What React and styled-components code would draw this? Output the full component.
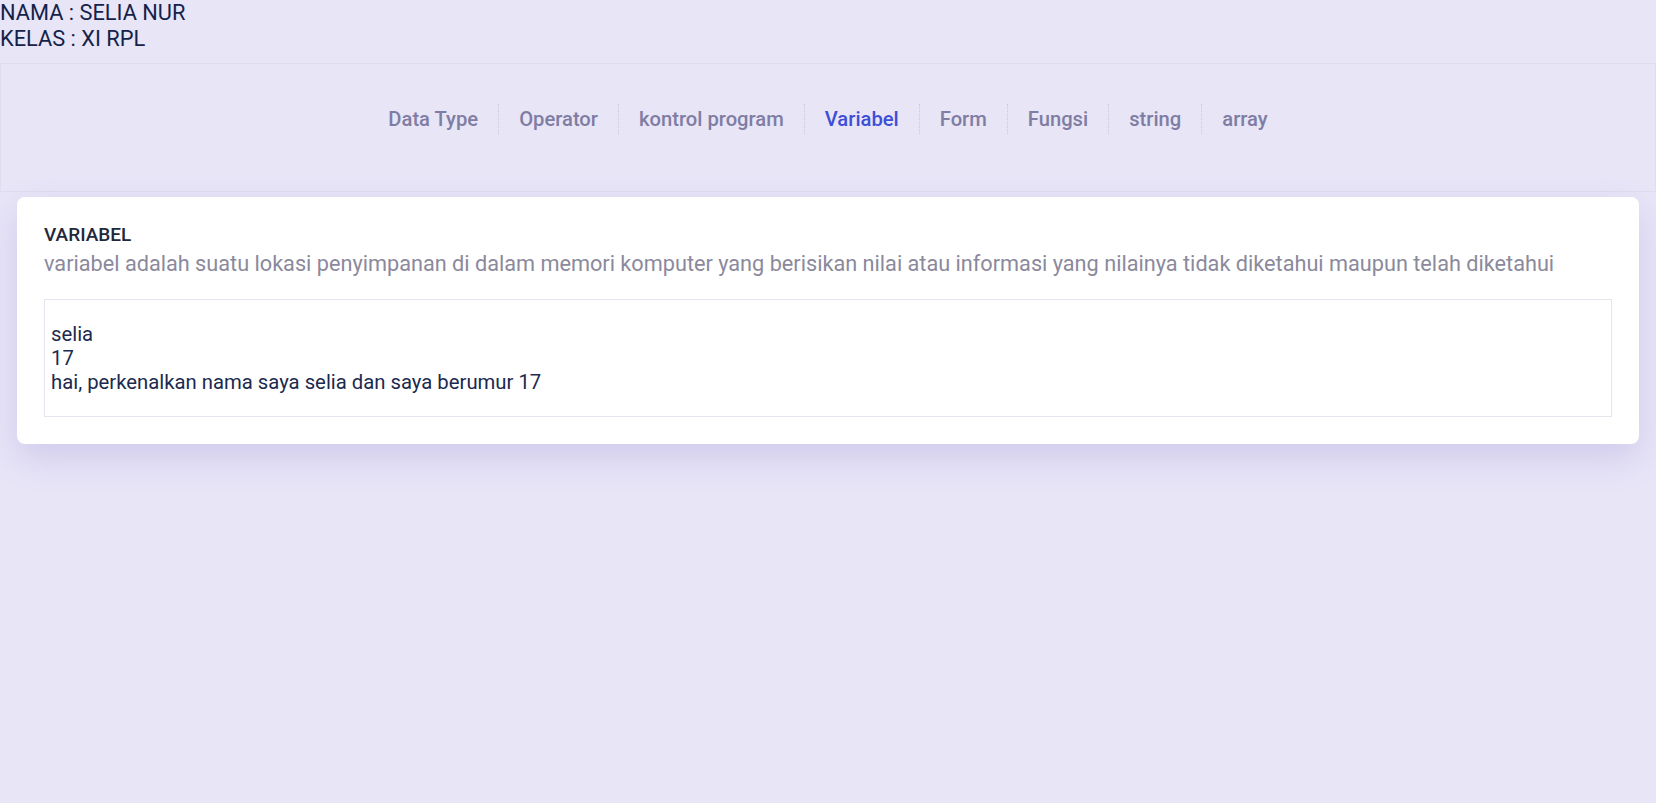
import styled, { createGlobalStyle } from 'styled-components';

// --- STYLED COMPONENTS ---

const GlobalStyle = createGlobalStyle`
  html, body {
    margin: 0;
    padding: 0;
    background-color: #e8e5f7;
    font-family: Roboto, "Liberation Sans", sans-serif;
  }
`;

const Page = styled.div`
  min-height: 803px;
  background-color: #e8e5f7;
`;

const Identity = styled.div`
  font-size: 21.8px;
  line-height: 26px;
  color: #14224a;
`;

const NavBox = styled.nav`
  margin-top: 11px;
  height: 129px;
  box-sizing: border-box;
  border: 1px solid #e0ddf1;
  padding-top: 40px;
`;

const NavList = styled.ul`
  display: flex;
  justify-content: center;
  list-style: none;
  margin: 0;
  padding: 0;
`;

const NavItem = styled.li`
  padding: 0 20px;
  font-size: 20.2px;
  font-weight: 500;
  line-height: 30px;
  color: ${(props) => (props.$active ? '#3d4fd8' : '#7f7da3')};
  border-left: ${(props) => (props.$first ? 'none' : '1px dotted #cbc8de')};
`;

const Card = styled.section`
  margin: 5px 17px 0;
  padding: 26px 27px 27px;
  background-color: #ffffff;
  border-radius: 8px;
  box-shadow: 0 14px 34px rgba(110, 100, 190, 0.2);
`;

const CardTitle = styled.h3`
  margin: 0;
  font-size: 19px;
  font-weight: 500;
  line-height: 24px;
  color: #23273a;
`;

const CardText = styled.p`
  margin: 2px 0 20px;
  font-size: 21.7px;
  line-height: 30px;
  color: #8b899c;
`;

const Output = styled.div`
  padding: 22px 6px;
  border: 1px solid #e6e5ee;
  font-size: 20.3px;
  line-height: 24px;
  color: #1b2a4e;
`;

// --- COMPONENT ---

const menu = ['Data Type', 'Operator', 'kontrol program', 'Variabel', 'Form', 'Fungsi', 'string', 'array'];

export default function App() {
  return (
    <Page>
      <GlobalStyle />
      <Identity>
        NAMA : SELIA NUR
        <br />
        KELAS : XI RPL
      </Identity>

      <NavBox>
        <NavList>
          {menu.map((item, i) => (
            <NavItem key={item} $first={i === 0} $active={item === 'Variabel'}>
              {item}
            </NavItem>
          ))}
        </NavList>
      </NavBox>

      <Card>
        <CardTitle>VARIABEL</CardTitle>
        <CardText>
          variabel adalah suatu lokasi penyimpanan di dalam memori komputer yang berisikan nilai atau informasi yang nilainya tidak diketahui maupun telah diketahui
        </CardText>
        <Output>
          selia
          <br />
          17
          <br />
          hai, perkenalkan nama saya selia dan saya berumur 17
        </Output>
      </Card>
    </Page>
  );
}
